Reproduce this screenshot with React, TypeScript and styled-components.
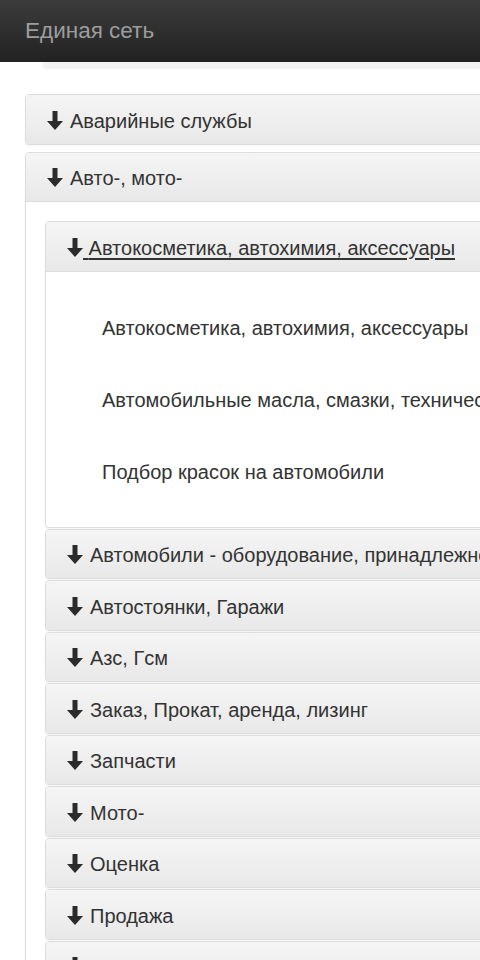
import React from "react";
import styled, { createGlobalStyle } from "styled-components";

const Global = createGlobalStyle`
  html, body {
    margin: 0;
    padding: 0;
    overflow: hidden;
    background: #fff;
  }
  body {
    font-family: "Liberation Sans", Arial, sans-serif;
    color: #333;
  }
`;

const Navbar = styled.header`
  height: 62px;
  background: linear-gradient(to bottom, #3c3c3c 0%, #222 100%);
  display: flex;
  align-items: center;
  padding: 0 25px;
  box-sizing: border-box;
`;

const Brand = styled.span`
  color: #9d9d9d;
  font-size: 22.5px;
  line-height: 1;
`;

const Ledge = styled.div`
  margin-left: 43px;
  width: 1200px;
  height: 6px;
  background: #f2f2f2;
  border-bottom-left-radius: 4px;
  box-shadow: 0 1px 2px rgba(0, 0, 0, 0.06);
`;

const Main = styled.main`
  width: 1200px;
  padding: 26px 0 0 25px;
`;

const Group = styled.div<{ $gap: number }>`
  display: flex;
  flex-direction: column;
  gap: ${(p) => p.$gap}px;
`;

const Panel = styled.section`
  border: 1px solid #ddd;
  border-radius: 4px;
  background: #fff;
  box-shadow: 0 1px 2px rgba(0, 0, 0, 0.05);
  overflow: hidden;
`;

const Heading = styled.div`
  height: 48.5px;
  box-sizing: border-box;
  display: flex;
  align-items: center;
  padding: 4px 21px 0;
  background: linear-gradient(to bottom, #f5f5f5 0%, #e8e8e8 100%);
  font-size: 20px;
  color: #333;
  white-space: nowrap;
`;

const TitleLink = styled.a<{ $underline?: boolean }>`
  color: #333;
  text-decoration: ${(p) => (p.$underline ? "underline" : "none")};
  text-underline-offset: 3px;
  display: inline-flex;
  align-items: center;
`;

const Arrow = styled.svg<{ $space: number }>`
  width: 16px;
  height: 19px;
  margin-right: ${(p) => p.$space}px;
  margin-top: -2px;
  flex: none;
`;

const Body = styled.div<{ $pad: string }>`
  border-top: 1px solid #ddd;
  padding: ${(p) => p.$pad};
`;

const ItemList = styled.ul`
  list-style: none;
  margin: 0;
  padding: 0;
`;

const Item = styled.li`
  height: 72px;
  display: flex;
  align-items: center;
  padding: 2px 0 0 56px;
  box-sizing: border-box;
  font-size: 20px;
  white-space: nowrap;
`;

const DownArrow = ({ space }: { space: number }) => (
  <Arrow $space={space} viewBox="0 0 16 19" aria-hidden="true">
    <path d="M5.5 0h5v10h5.5L8 19 0 10h5.5z" fill="#2b2b2b" />
  </Arrow>
);

type HeadProps = { title: string; underline?: boolean };

const PanelHead = ({ title, underline }: HeadProps) => (
  <Heading>
    {underline ? (
      <TitleLink href="#" $underline>
        <DownArrow space={0} />
        <span>{"\u00a0"}{title}</span>
      </TitleLink>
    ) : (
      <TitleLink href="#">
        <DownArrow space={7} />
        <span>{title}</span>
      </TitleLink>
    )}
  </Heading>
);

const subs = [
  "Автомобили - оборудование, принадлежности",
  "Автостоянки, Гаражи",
  "Азс, Гсм",
  "Заказ, Прокат, аренда, лизинг",
  "Запчасти",
  "Мото-",
  "Оценка",
  "Продажа",
  "Ремонт, Сервис",
];

const items = [
  "Автокосметика, автохимия, аксессуары",
  "Автомобильные масла, смазки, технические жидкости",
  "Подбор красок на автомобили",
];

export default function App() {
  return (
    <>
      <Global />
      <Navbar>
        <Brand>Единая сеть</Brand>
      </Navbar>
      <Ledge />
      <Main>
        <Group $gap={7}>
          <Panel>
            <PanelHead title="Аварийные службы" />
          </Panel>
          <Panel>
            <PanelHead title="Авто-, мото-" />
            <Body $pad="19px">
              <Group $gap={1}>
                <Panel>
                  <PanelHead title="Автокосметика, автохимия, аксессуары" underline />
                  <Body $pad="20px 0 19px">
                    <ItemList>
                      {items.map((t) => (
                        <Item key={t}>{t}</Item>
                      ))}
                    </ItemList>
                  </Body>
                </Panel>
                {subs.map((s) => (
                  <Panel key={s}>
                    <PanelHead title={s} />
                  </Panel>
                ))}
              </Group>
            </Body>
          </Panel>
        </Group>
      </Main>
    </>
  );
}
